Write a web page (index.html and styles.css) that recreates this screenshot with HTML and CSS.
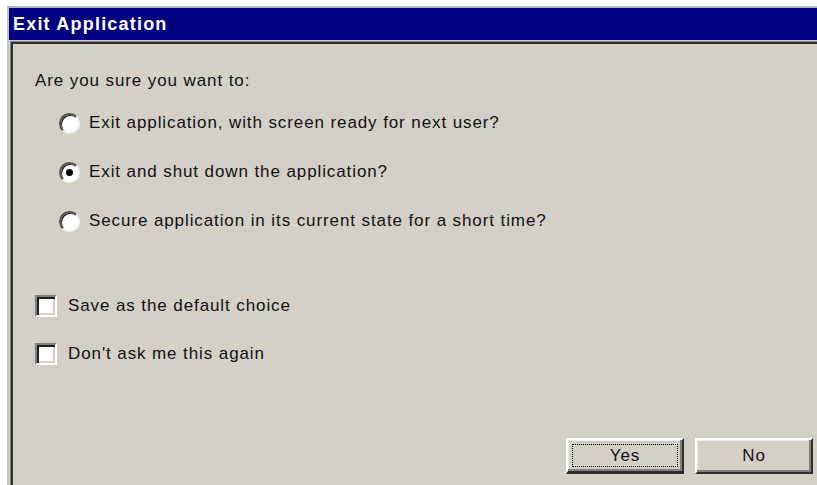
FILE: index.html
```html
<!DOCTYPE html>
<html lang="en">
<head>
<meta charset="utf-8">
<title>Exit Application</title>
<link rel="stylesheet" href="styles.css">
</head>
<body>
<div class="window">
  <div class="titlebar">Exit Application</div>
  <div class="frame">
    <div class="sunken">
      <div class="client">
        <p class="prompt">Are you sure you want to:</p>

        <div class="options">
          <div class="opt"><span class="radio"></span><span>Exit application, with screen ready for next user?</span></div>
          <div class="opt"><span class="radio checked"><span class="dot"></span></span><span>Exit and shut down the application?</span></div>
          <div class="opt"><span class="radio"></span><span>Secure application in its current state for a short time?</span></div>
        </div>

        <div class="checks">
          <div class="chk"><span class="box"></span><span>Save as the default choice</span></div>
          <div class="chk"><span class="box"></span><span>Don't ask me this again</span></div>
        </div>

        <div class="buttons">
          <button class="btn default" type="button"><span class="focus">Yes</span></button>
          <button class="btn" type="button"><span class="plain">No</span></button>
        </div>
      </div>
    </div>
  </div>
</div>
</body>
</html>
```

FILE: styles.css
```css
* {
  box-sizing: border-box;
}

html,
body {
  margin: 0;
  height: 100%;
  background: #ffffff;
  overflow: hidden;
}

body {
  font-family: "Liberation Sans", Arial, sans-serif;
  font-size: 17px;
  letter-spacing: 0.9px;
  color: #111111;
}

/* dialog frame */
.window {
  width: 822px;
  height: 500px;
  margin: 6px 0 0 7px;
  border-top: 2px solid #b4b4b4;
  border-left: 2px solid #c4c4c4;
  background: #d4d0c8;
}

.titlebar {
  height: 32px;
  line-height: 32px;
  padding-left: 4px;
  background: #000080;
  color: #ffffff;
  font-weight: bold;
  font-size: 18px;
  letter-spacing: 1.2px;
}

.frame {
  padding: 1px 0 0 1px;
  background: #d4d0c8;
}

.sunken {
  border-top: 1px solid #808080;
  border-left: 1px solid #808080;
}

.client {
  border-top: 2px solid #303030;
  border-left: 2px solid #303030;
  height: 460px;
  background: #d4d0c8;
}

.prompt {
  margin: 0;
  padding: 25px 0 0 22px;
  line-height: 24px;
}

/* radio group */
.options {
  margin-top: 18px;
  padding-left: 46px;
  display: flex;
  flex-direction: column;
  gap: 25px;
}

.opt {
  display: flex;
  align-items: center;
  gap: 9px;
  height: 24px;
}

.radio {
  width: 21px;
  height: 21px;
  flex: none;
  border-radius: 50%;
  background: #ffffff;
  border: 2px solid;
  border-color: #505050 #f4f4f4 #f4f4f4 #505050;
  box-shadow: inset 1px 1px 0 #202020;
  display: flex;
  align-items: center;
  justify-content: center;
}

.dot {
  width: 7px;
  height: 7px;
  border-radius: 50%;
  background: #000000;
}

/* checkboxes */
.checks {
  margin-top: 61px;
  padding-left: 22px;
  display: flex;
  flex-direction: column;
  gap: 24px;
}

.chk {
  display: flex;
  align-items: center;
  gap: 11px;
  height: 24px;
}

.box {
  width: 22px;
  height: 22px;
  flex: none;
  background: #ffffff;
  border: 2px solid;
  border-color: #808080 #ffffff #ffffff #808080;
  box-shadow: inset 2px 2px 0 #202020, inset -2px -2px 0 #d4d0c8;
}

/* buttons */
.buttons {
  margin-top: 72px;
  padding-right: 16px;
  display: flex;
  justify-content: flex-end;
  gap: 11px;
}

.btn {
  width: 118px;
  height: 36px;
  padding: 4px;
  margin: 0;
  background: #d4d0c8;
  border: 2px solid;
  border-color: #ffffff #303030 #303030 #ffffff;
  box-shadow: inset -2px -2px 0 #808080, inset 1px 1px 0 #ececec;
  font-family: "Liberation Sans", Arial, sans-serif;
  font-size: 17px;
  letter-spacing: 0.9px;
  color: #111111;
  display: flex;
}

.btn.default {
  border-bottom-width: 3px;
}

.focus,
.plain {
  flex: 1;
  display: flex;
  align-items: center;
  justify-content: center;
  border: 1px dotted transparent;
}

.focus {
  border-color: #000000;
}
```
